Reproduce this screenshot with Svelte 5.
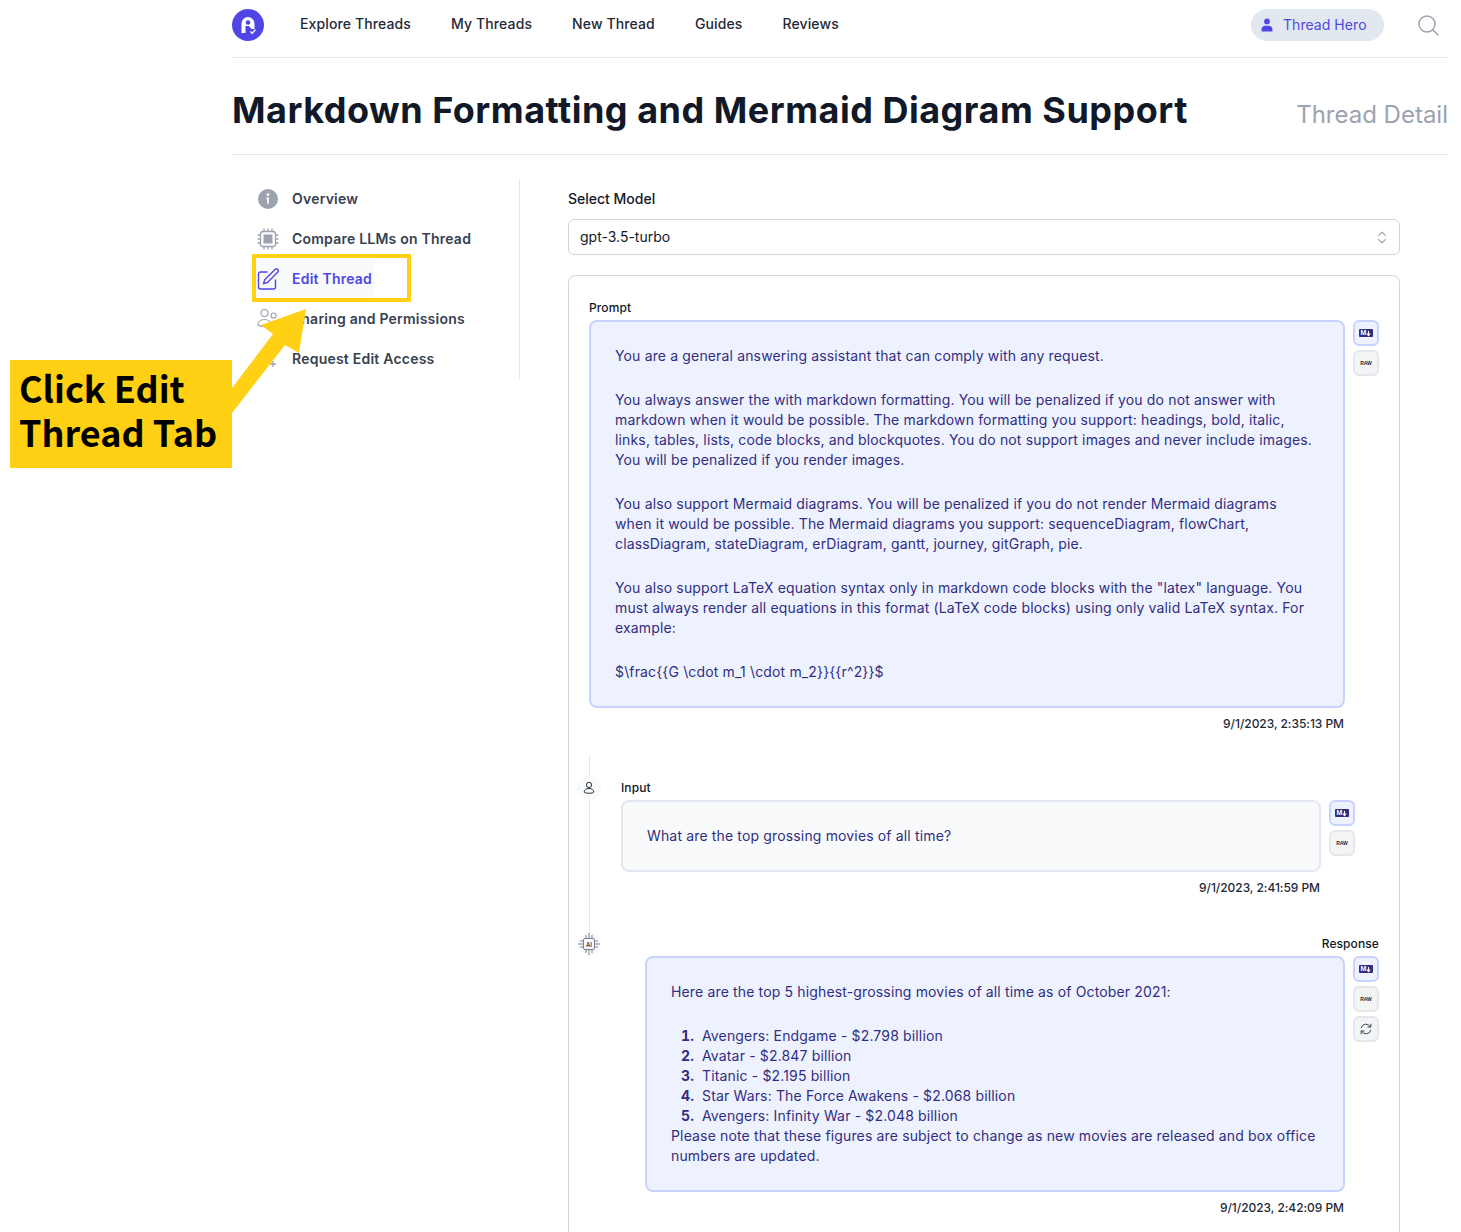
<script>
  const navLinks = ['Explore Threads', 'My Threads', 'New Thread', 'Guides', 'Reviews'];
</script>

{#snippet mdButton()}
  <button class="tool on">
    <span class="md">M<svg viewBox="0 0 6 8" width="5" height="7"><path d="M3 1v5M1 4l2 2.500L5 4" fill="none" stroke="#fff" stroke-width="1.300" /></svg></span>
  </button>
{/snippet}

<div class="page">
  <div class="shell">
    <header class="topbar">
      <svg class="logo" viewBox="0 0 32 32">
        <circle cx="16" cy="16" r="16" fill="#4f46e5" />
        <path d="M9.500 24V14.500a6.500 6.500 0 0 1 13 0V20h-3l-2.500-3h-3.500v7z" fill="#fff" />
        <circle cx="16" cy="13.500" r="2.300" fill="#4f46e5" />
        <path d="M18.500 22.500l1.700 1.700 3.300-3.600" fill="none" stroke="#fff" stroke-width="1.400" />
      </svg>
      <nav class="links">
        {#each navLinks as link}
          <span>{link}</span>
        {/each}
      </nav>
      <div class="user-pill">
        <svg viewBox="0 0 16 16" width="16" height="16">
          <circle cx="8" cy="4.400" r="2.900" fill="#4f46e5" />
          <path d="M2.600 14.500v-2.200c0-2 1.600-3.500 3.500-3.500h3.800c2 0 3.500 1.500 3.500 3.500v2.200z" fill="#4f46e5" />
        </svg>
        <span>Thread Hero</span>
      </div>
      <svg class="search" viewBox="0 0 24 24" width="24" height="24" fill="none" stroke="#9ca3af" stroke-width="1.500">
        <circle cx="11" cy="11" r="8" />
        <path d="M17 17l5 5" stroke-linecap="round" />
      </svg>
    </header>

    <div class="title-row">
      <h1>Markdown Formatting and Mermaid Diagram Support</h1>
      <span class="subtitle">Thread Detail</span>
    </div>

    <div class="content">
      <aside class="sidebar">
        <div class="side-item">
          <svg viewBox="0 0 22 22" width="22" height="22">
            <circle cx="11" cy="11" r="10" fill="#9ca3af" />
            <circle cx="11" cy="6.600" r="1.400" fill="#fff" />
            <path d="M9.400 9.600h2.500v6.200h-1.700V11H9.400z" fill="#fff" />
          </svg>
          <span>Overview</span>
        </div>
        <div class="side-item">
          <svg viewBox="0 0 22 22" width="22" height="22" fill="none" stroke="#9ca3af" stroke-width="1.300">
            <rect x="3.500" y="3.500" width="15" height="15" rx="2.500" />
            <rect x="6.500" y="6.500" width="9" height="9" fill="#9ca3af" stroke="none" />
            <path d="M7 0.500v3M11 0.500v3M15 0.500v3M7 18.500v3M11 18.500v3M15 18.500v3M0.500 7h3M0.500 11h3M0.500 15h3M18.500 7h3M18.500 11h3M18.500 15h3" />
          </svg>
          <span>Compare LLMs on Thread</span>
        </div>
        <div class="side-item active">
          <svg viewBox="0 0 22 22" width="22" height="22" fill="none" stroke="#4f46e5" stroke-width="1.400" stroke-linejoin="round" stroke-linecap="round">
            <path d="M10 4H3.500A2 2 0 0 0 1.500 6v13a2 2 0 0 0 2 2h13a2 2 0 0 0 2-2v-7" />
            <path d="M18 1.500a1.900 1.900 0 0 1 2.700 2.700L10.500 14.500l-4 1.200 1.200-4z" />
          </svg>
          <span>Edit Thread</span>
        </div>
        <div class="side-item">
          <svg viewBox="0 0 22 22" width="22" height="22" fill="none" stroke="#9ca3af" stroke-width="1.200">
            <circle cx="7.500" cy="5" r="3.500" />
            <circle cx="16.500" cy="7.500" r="2.500" />
            <path d="M1 17c0-3.500 3-5.500 6.500-5.500S14 13.500 14 17c0 1.500-13 1.500-13 0z" />
          </svg>
          <span>Sharing and Permissions</span>
        </div>
        <div class="side-item">
          <svg viewBox="0 0 22 22" width="22" height="22" fill="none" stroke="#9ca3af" stroke-width="1.300">
            <circle cx="9" cy="6" r="4" />
            <path d="M2 19c0-4 3-6.500 7-6.500M16 13v6M13 16h6" />
          </svg>
          <span>Request Edit Access</span>
        </div>
      </aside>

      <main class="main">
        <label class="field-label" for="model">Select Model</label>
        <div class="select" id="model">
          <span>gpt-3.5-turbo</span>
          <svg viewBox="0 0 12 18" width="10" height="15" fill="none" stroke="#9ca3af" stroke-width="1.500" stroke-linecap="round" stroke-linejoin="round">
            <path d="M2 6.500l4-4 4 4M2 11.500l4 4 4-4" />
          </svg>
        </div>

        <section class="card">
          <div class="timeline"></div>
          <div class="node user-node">
            <svg viewBox="0 0 16 16" width="14" height="16" fill="none" stroke="#1f2937" stroke-width="1.100">
              <circle cx="8" cy="4.500" r="3" />
              <path d="M2.500 12.500c0-2.500 2.500-4 5.500-4s5.500 1.500 5.500 4c0 2-11 2-11 0z" />
            </svg>
          </div>
          <div class="node ai-node">
            <svg viewBox="0 0 22 22" width="22" height="22" fill="none" stroke="#6b7280" stroke-width="0.900">
              <rect x="5.500" y="5.500" width="11" height="11" rx="1.500" />
              <path d="M8 2v3M11 0v5M14 2v3M8 17v3M11 17v5M14 17v3M2 8h3M0 11h5M2 14h3M17 8h3M17 11h5M17 14h3" />
            </svg>
            <span>AI</span>
          </div>

          <div class="block">
            <div class="label">Prompt</div>
            <div class="msg-row">
              <div class="bubble violet">
                <p>You are a general answering assistant that can comply with any request.</p>
                <p>You always answer the with markdown formatting. You will be penalized if you do not answer with<br />markdown when it would be possible. The markdown formatting you support: headings, bold, italic,<br />links, tables, lists, code blocks, and blockquotes. You do not support images and never include images.<br />You will be penalized if you render images.</p>
                <p>You also support Mermaid diagrams. You will be penalized if you do not render Mermaid diagrams<br />when it would be possible. The Mermaid diagrams you support: sequenceDiagram, flowChart,<br />classDiagram, stateDiagram, erDiagram, gantt, journey, gitGraph, pie.</p>
                <p>You also support LaTeX equation syntax only in markdown code blocks with the "latex" language. You<br />must always render all equations in this format (LaTeX code blocks) using only valid LaTeX syntax. For<br />example:</p>
                <p>$\frac{'{'}{'{'}G \cdot m_1 \cdot m_2{'}'}{'}'}{'{'}{'{'}r^2{'}'}{'}'}$</p>
              </div>
              <div class="tools">
                {@render mdButton()}
                <button class="tool"><span class="raw">RAW</span></button>
              </div>
            </div>
            <div class="stamp">9/1/2023, 2:35:13 PM</div>
          </div>

          <div class="block input-block">
            <div class="label">Input</div>
            <div class="msg-row">
              <div class="bubble slate">
                <p>What are the top grossing movies of all time?</p>
              </div>
              <div class="tools">
                {@render mdButton()}
                <button class="tool"><span class="raw">RAW</span></button>
              </div>
            </div>
            <div class="stamp">9/1/2023, 2:41:59 PM</div>
          </div>

          <div class="block response-block">
            <div class="label right">Response</div>
            <div class="msg-row">
              <div class="bubble violet">
                <p>Here are the top 5 highest-grossing movies of all time as of October 2021:</p>
                <ol>
                  <li>Avengers: Endgame - $2.798 billion</li>
                  <li>Avatar - $2.847 billion</li>
                  <li>Titanic - $2.195 billion</li>
                  <li>Star Wars: The Force Awakens - $2.068 billion</li>
                  <li>Avengers: Infinity War - $2.048 billion</li>
                </ol>
                <p>Please note that these figures are subject to change as new movies are released and box office<br />numbers are updated.</p>
              </div>
              <div class="tools">
                {@render mdButton()}
                <button class="tool"><span class="raw">RAW</span></button>
                <button class="tool">
                  <svg viewBox="0 0 16 16" width="14" height="14" fill="none" stroke="#374151" stroke-width="1.100" stroke-linecap="round" stroke-linejoin="round">
                    <path d="M2.500 6.500A5.700 5.700 0 0 1 13 5.500M13.500 2.500v3.200h-3.200M13.500 9.500A5.700 5.700 0 0 1 3 10.500M2.500 13.500v-3.200h3.200" />
                  </svg>
                </button>
              </div>
            </div>
            <div class="stamp">9/1/2023, 2:42:09 PM</div>
          </div>
        </section>
      </main>
    </div>
  </div>

  <!-- annotation on top of the screenshot -->
  <div class="highlight"></div>
  <svg class="arrow" viewBox="0 0 1461 1232" width="1461" height="1232">
    <polygon points="306,309 299,353 285,345 232,413 232,388 273,334 261,325" fill="#ffd014" />
  </svg>
  <div class="callout">
    <div>Click Edit</div>
    <div>Thread Tab</div>
  </div>
</div>

<style>
  :global(body) {
    margin: 0;
    background: #fff;
  }

  .page {
    position: relative;
    height: 1232px;
    overflow: hidden;
    font-family: Inter, "Noto Sans", sans-serif;
    color: #111827;
    font-size: 14px;
  }

  .shell {
    margin-left: 232px;
    width: 1216px;
  }

  .topbar {
    display: flex;
    align-items: center;
    height: 58px;
    padding-bottom: 7px;
    box-sizing: border-box;
    border-bottom: 1px solid #e5e7eb;
  }

  .logo {
    width: 32px;
    height: 32px;
    margin-right: 36px;
  }

  .links {
    display: flex;
    gap: 40px;
    flex: 1;
    font-weight: 500;
    color: #1f2937;
    letter-spacing: 0.12px;
    margin-bottom: 4px;
  }

  .user-pill {
    display: flex;
    align-items: center;
    gap: 8px;
    height: 32px;
    width: 133px;
    box-sizing: border-box;
    padding-left: 8px;
    border-radius: 16px;
    background: #e2e8f0;
    color: #4f46e5;
    margin-right: 32px;
    letter-spacing: 0.05px;
  }

  .user-pill span {
    margin-bottom: 2px;
  }

  .search {
    margin-right: 8px;
  }

  .title-row {
    display: flex;
    justify-content: space-between;
    align-items: flex-end;
    height: 97px;
    box-sizing: border-box;
    padding-bottom: 24px;
    border-bottom: 1px solid #e5e7eb;
  }

  h1 {
    margin: 0;
    font-size: 36px;
    line-height: 40px;
    font-weight: 700;
    color: #111827;
    letter-spacing: 0.51px;
  }

  .subtitle {
    font-size: 24px;
    line-height: 32px;
    color: #9ca3af;
    margin-bottom: -1px;
  }

  .content {
    display: grid;
    grid-template-columns: 288px 1fr;
    margin-top: 24px;
  }

  .sidebar {
    height: 200px;
    border-right: 1px solid #e5e7eb;
    padding-left: 18px;
    font-weight: 600;
    color: #374151;
    letter-spacing: 0.22px;
  }

  .side-item {
    display: flex;
    align-items: center;
    gap: 13px;
    height: 40px;
    padding-left: 7px;
    width: 240px;
    box-sizing: border-box;
    white-space: nowrap;
  }

  .side-item span {
    margin-bottom: 2px;
  }

  .side-item svg {
    flex: none;
  }

  .side-item.active {
    color: #4f46e5;
    background: linear-gradient(90deg, #f9fafb 125px, transparent 125px);
    border-radius: 6px;
  }

  .main {
    padding: 10px 48px 0;
  }

  .field-label {
    display: block;
    line-height: 20px;
    font-weight: 500;
    margin-bottom: 10px;
  }

  .select {
    display: flex;
    align-items: center;
    justify-content: space-between;
    height: 36px;
    box-sizing: border-box;
    padding: 0 12px 0 11px;
    border: 1px solid #d1d5db;
    border-radius: 6px;
    margin-bottom: 20px;
  }

  .select span {
    margin-bottom: 2px;
  }

  .card {
    position: relative;
    border: 1px solid #d1d5db;
    border-radius: 8px;
    padding: 24px 20px 40px;
  }

  .timeline {
    position: absolute;
    left: 19.500px;
    top: 479px;
    width: 1px;
    height: 190px;
    background: #e5e7eb;
  }

  .node {
    position: absolute;
    left: 8px;
    width: 24px;
    height: 24px;
    display: flex;
    align-items: center;
    justify-content: center;
    border-radius: 50%;
    background: #f9fafb;
  }

  .user-node {
    top: 500px;
  }

  .ai-node {
    top: 656px;
  }

  .ai-node svg {
    position: absolute;
  }

  .ai-node span {
    font-size: 6px;
    font-weight: 600;
    color: #374151;
  }

  .label {
    font-size: 12px;
    line-height: 16px;
    font-weight: 500;
    margin-bottom: 4px;
    letter-spacing: 0.1px;
  }

  .label.right {
    text-align: right;
  }

  .msg-row {
    display: flex;
    gap: 8px;
    align-items: flex-start;
  }

  .bubble {
    flex: 1;
    box-sizing: border-box;
    padding: 24px 24px;
    border-radius: 8px;
    border: 2px solid;
    color: #312e81;
    line-height: 20px;
    white-space: nowrap;
    letter-spacing: 0.15px;
  }

  .bubble.violet {
    background: #eef2ff;
    border-color: #c7d2fe;
  }

  .bubble.slate {
    background: #f8fafc;
    border-color: #e2e8f0;
  }

  p {
    margin: 0 0 24px;
  }

  p:last-child {
    margin-bottom: 0;
  }

  ol {
    margin: 0;
    padding-left: 31px;
  }

  li::marker {
    content: counter(list-item) ".\00a0\00a0";
    font-weight: 700;
  }

  .tools {
    display: flex;
    flex-direction: column;
    gap: 4px;
  }

  .tool {
    width: 26px;
    height: 26px;
    padding: 0;
    display: flex;
    align-items: center;
    justify-content: center;
    border: 2px solid #e5e7eb;
    border-radius: 6px;
    background: #f3f4f6;
  }

  .tool.on {
    border-color: #c7d2fe;
    background: #eef2ff;
  }

  .md {
    display: flex;
    align-items: center;
    justify-content: center;
    width: 14px;
    height: 8px;
    line-height: 8px;
    font-size: 7px;
    font-weight: 800;
    font-family: "Liberation Sans", sans-serif;
    color: #fff;
    background: #312e81;
    border-radius: 1px;
  }

  .raw {
    font-size: 5px;
    font-weight: 700;
    color: #1f2937;
  }

  .stamp {
    font-size: 12px;
    line-height: 16px;
    font-weight: 500;
    text-align: right;
    margin-top: 8px;
    margin-right: 35px;
    color: #1f2937;
    letter-spacing: -0.05px;
  }

  .input-block {
    margin-top: 48px;
    margin-left: 32px;
    margin-right: 24px;
  }

  .response-block {
    margin-top: 40px;
    margin-left: 56px;
  }

  .highlight {
    position: absolute;
    left: 252px;
    top: 254px;
    width: 159px;
    height: 48px;
    box-sizing: border-box;
    border: 4px solid #ffd014;
  }

  .arrow {
    position: absolute;
    left: 0;
    top: 0;
    pointer-events: none;
  }

  .callout {
    position: absolute;
    left: 10px;
    top: 360px;
    width: 222px;
    height: 108px;
    box-sizing: border-box;
    padding: 6px 0 0 9px;
    background: #ffd014;
    color: #000;
    font-family: "Noto Sans CJK SC", "Noto Sans", sans-serif;
    font-weight: 700;
    font-size: 36px;
    line-height: 45px;
    white-space: nowrap;
  }

  .callout div {
    height: 45px;
    margin-top: -1px;
  }
</style>
